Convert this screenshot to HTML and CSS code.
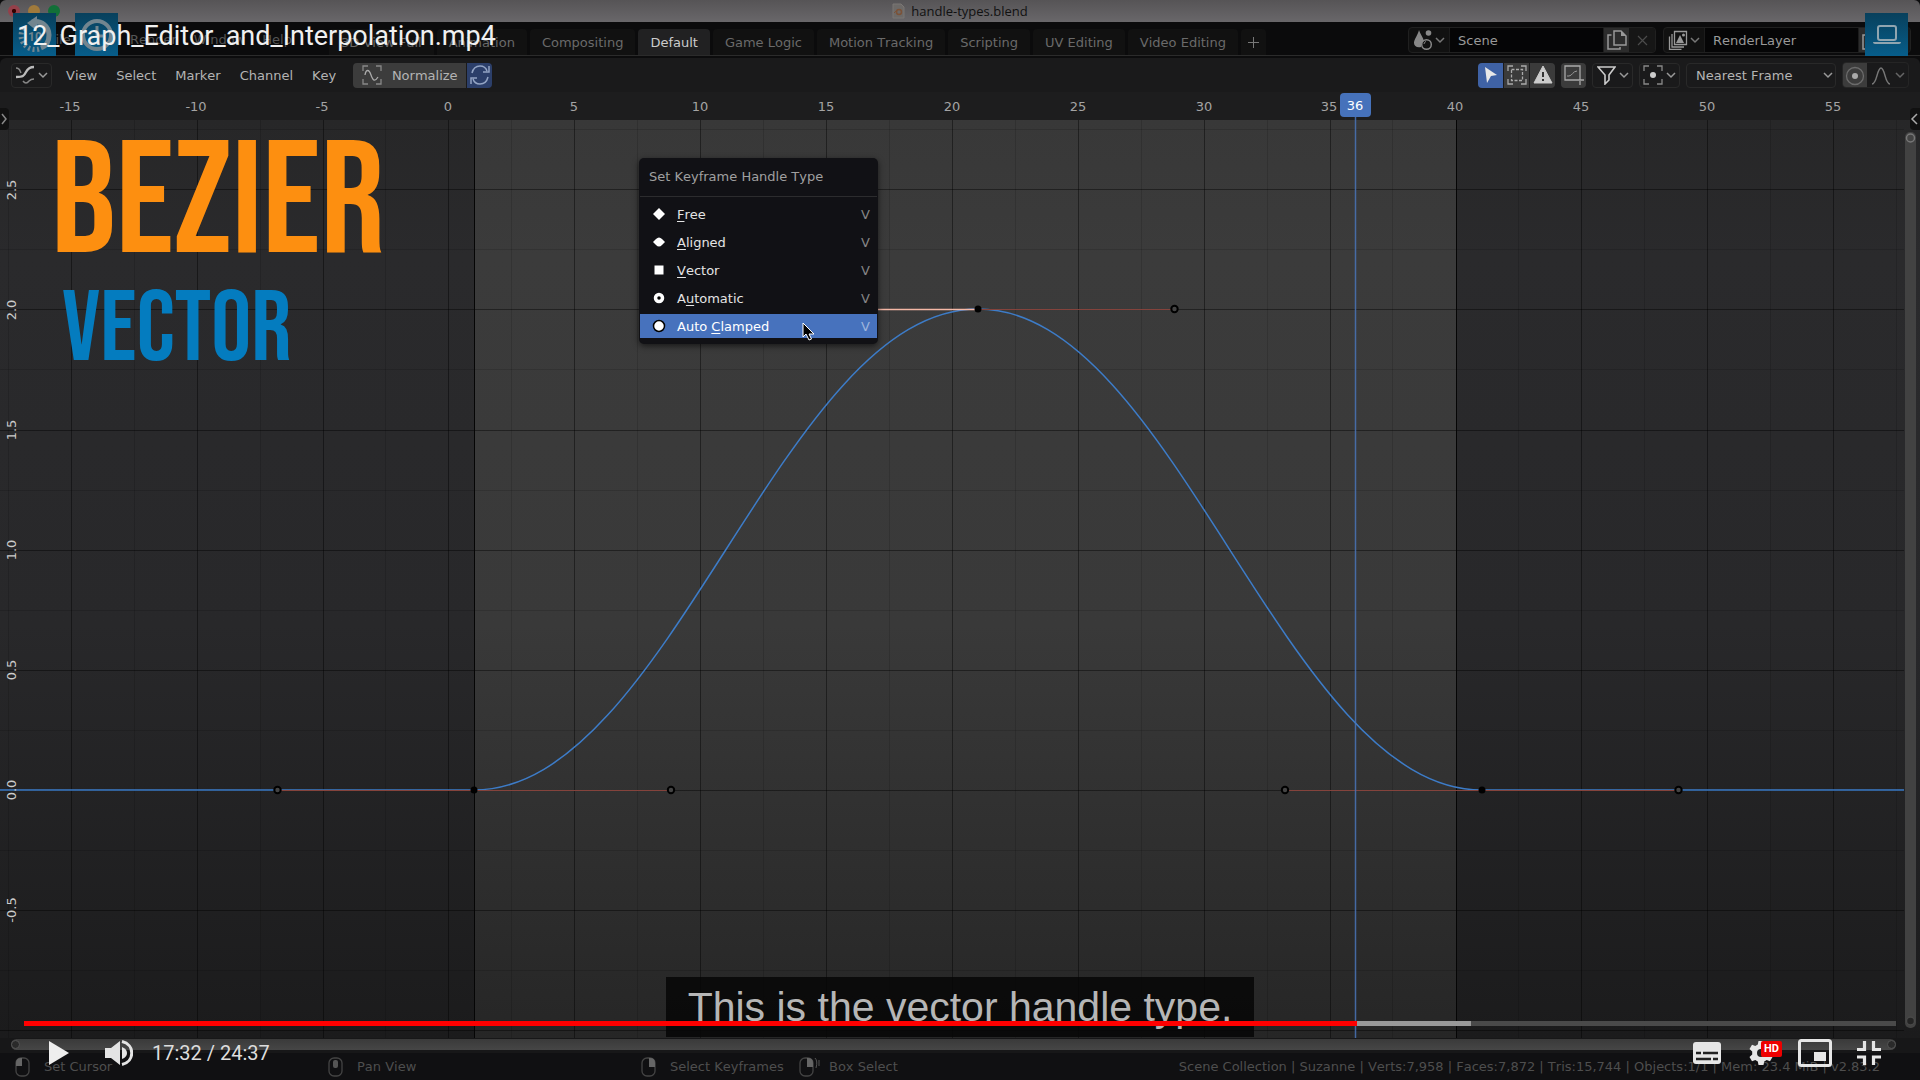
FILE: index.html
```
<!DOCTYPE html>
<html lang="en">
<head>
    <meta charset="utf-8">
    <title>12_Graph_Editor_and_Interpolation.mp4</title>
    <link rel="stylesheet" href="styles.css">
</head>
<body>
    <div class="window">
        <div class="titlebar">
            <div class="lights">
                <span class="light red"></span>
                <span class="light yellow"></span>
                <span class="light green"></span>
            </div>
            <svg class="file-icon" width="13" height="16" viewBox="0 0 13 16"><path d="M1 1h8l3 3v11H1z" fill="#6d6a68" stroke="#7b7774"/><circle cx="7" cy="9" r="2.5" fill="none" stroke="#7b5238" stroke-width="1.5"/><path d="M2 10l4-4" stroke="#7b5238"/></svg>
            <span>handle-types.blend</span>
        </div>

        <div class="topbar">
            <div class="app-menu">
                <button>File</button>
                <button>Edit</button>
                <button>Render</button>
                <button>Window</button>
                <button>Help</button>
            </div>
            <div class="tabs">
                <button>3D View Full</button>
                <button>Animation</button>
                <button>Compositing</button>
                <button class="active">Default</button>
                <button>Game Logic</button>
                <button>Motion Tracking</button>
                <button>Scripting</button>
                <button>UV Editing</button>
                <button>Video Editing</button>
                <button class="add" aria-label="Add workspace"><svg width="11" height="11" viewBox="0 0 11 11"><path d="M5.5 0v11M0 5.5h11" stroke="#777"/></svg></button>
            </div>
            <div class="data-block">
                <button class="pick" aria-label="Browse scene">
                    <svg width="20" height="22" viewBox="0 0 20 22"><path d="M6 1c1 4 4 7 5 11-2 1-3 3-3 6-4 1-7-1-7-4C1 10 5 6 6 1z" fill="#888"/><circle cx="15.5" cy="4" r="2.8" fill="#888"/><circle cx="13.5" cy="15.5" r="4.8" fill="none" stroke="#888" stroke-width="1.5"/><path d="M11 15q0-2 2-2.5" fill="none" stroke="#888"/></svg>
                    <svg width="10" height="7" viewBox="0 0 10 7"><path d="M1 1l4 4 4-4" fill="none" stroke="#777" stroke-width="1.5"/></svg>
                </button>
                <input type="text" value="Scene" aria-label="Scene">
                <button class="copy" aria-label="New scene"><svg width="20" height="20" viewBox="0 0 20 20"><path d="M7 1h7l5 5v9H7zM4.5 5H1v14h12v-2" fill="none" stroke="#999" stroke-width="1.5"/><path d="M14 1v5h5z" fill="#999"/></svg></button>
                <button class="del" aria-label="Remove scene"><svg width="11" height="11" viewBox="0 0 11 11"><path d="M1 1l9 9M10 1l-9 9" stroke="#4b4b4b" stroke-width="1.2"/></svg></button>
            </div>
            <div class="data-block">
                <button class="pick" aria-label="Browse view layer">
                    <svg width="20" height="20" viewBox="0 0 20 20"><path d="M6.5 1.5h12v13h-12zM4 4v13h12M1.5 6.5v13h12" fill="none" stroke="#999" stroke-width="1.3"/><path d="M8 13l4-8 4 8z" fill="#999"/><circle cx="15.5" cy="5" r="1.5" fill="#999"/></svg>
                    <svg width="10" height="7" viewBox="0 0 10 7"><path d="M1 1l4 4 4-4" fill="none" stroke="#777" stroke-width="1.5"/></svg>
                </button>
                <input type="text" value="RenderLayer" aria-label="View layer">
                <button class="copy" aria-label="New view layer"><svg width="20" height="20" viewBox="0 0 20 20"><path d="M7 1h7l5 5v9H7zM4.5 5H1v14h12v-2" fill="none" stroke="#999" stroke-width="1.5"/></svg></button>
                <button class="del" aria-label="Remove view layer"></button>
            </div>
        </div>

        <div class="editor">
            <div class="editor-header">
                <button class="box-btn" aria-label="Editor type">
                    <svg width="20" height="20" viewBox="0 0 20 20"><path d="M1 12c7 0 8-1 10-5s4-5 8-5" fill="none" stroke="#bbb" stroke-width="2.3"/><path d="M1 3c4 0 4 3 5 5M8 16q3 4 6 0 2-2 5-2" fill="none" stroke="#888" stroke-width="1.5"/></svg>
                    <svg width="10" height="7" viewBox="0 0 10 7"><path d="M1 1l4 4 4-4" fill="none" stroke="#999" stroke-width="1.5"/></svg>
                </button>
                <div class="menus">
                    <button>View</button>
                    <button>Select</button>
                    <button>Marker</button>
                    <button>Channel</button>
                    <button>Key</button>
                </div>
                <div class="normalize">
                    <button class="norm">
                        <svg width="20" height="20" viewBox="0 0 20 20"><path d="M1 6V1h5M14 1h5v5M19 14v5h-5M6 19H1v-5" fill="none" stroke="#888" stroke-width="1.3"/><path d="M3 10c1-6 4-6 6 0s4 7 7 2" fill="none" stroke="#aaa" stroke-width="1.3"/></svg>
                        Normalize
                    </button>
                    <button class="auto" aria-label="Auto normalize"><svg width="20" height="20" viewBox="0 0 20 20"><path d="M2 8c1-4 4-7 8-7 3 0 6 2 7 5M18 12c-1 4-4 7-8 7-3 0-6-2-7-5M19 1v6h-6M1 19v-6h6" fill="none" stroke="#93a4c4" stroke-width="1.5"/></svg></button>
                </div>
                <span class="spacer"></span>
                <div class="tool-group">
                    <button class="on" aria-label="Only selected"><svg width="18" height="18" viewBox="0 0 18 18"><path d="M3 1l12 8-6 1-4 7z" fill="#e8e8e8"/></svg></button>
                    <button aria-label="Show hidden"><svg width="20" height="20" viewBox="0 0 20 20"><path d="M1 6V1h5M14 1h5v5M19 14v5h-5M6 19H1v-5" fill="none" stroke="#aaa" stroke-width="1.3"/><rect x="4.5" y="4.5" width="11" height="11" fill="none" stroke="#aaa" stroke-width="1.3" stroke-dasharray="3 1.5"/></svg></button>
                    <button aria-label="Only errors"><svg width="20" height="20" viewBox="0 0 20 20"><path d="M10 1l9 17H1z" fill="#ccc" stroke="#ccc" stroke-linejoin="round"/><path d="M10 7v5M10 14v2" stroke="#333" stroke-width="2"/></svg></button>
                </div>
                <div class="tool-group">
                    <button aria-label="Create ghost curves"><svg width="20" height="20" viewBox="0 0 20 20"><path d="M1 1h15v14H1zM11 15h9M16 16v4" fill="none" stroke="#aaa" stroke-width="1.3"/><path d="M3 11h2c3 0 4-5 8-5" fill="none" stroke="#999"/></svg></button>
                </div>
                <button class="box-btn" aria-label="Filters">
                    <svg width="19" height="19" viewBox="0 0 19 19"><path d="M1 1h17l-6 8v5l-4 4V9z" fill="none" stroke="#ccc" stroke-width="1.6"/></svg>
                    <svg width="10" height="7" viewBox="0 0 10 7"><path d="M1 1l4 4 4-4" fill="none" stroke="#999" stroke-width="1.5"/></svg>
                </button>
                <button class="box-btn" aria-label="Pivot point">
                    <svg width="20" height="20" viewBox="0 0 20 20"><path d="M1 6V1h5M14 1h5v5M19 14v5h-5M6 19H1v-5" fill="none" stroke="#888" stroke-width="1.3"/><circle cx="10" cy="10" r="3" fill="#ccc"/></svg>
                    <svg width="10" height="7" viewBox="0 0 10 7"><path d="M1 1l4 4 4-4" fill="none" stroke="#999" stroke-width="1.5"/></svg>
                </button>
                <div class="snap">
                    <select aria-label="Auto snap">
                        <option>Nearest Frame</option>
                        <option>No Auto-Snap</option>
                    </select>
                    <svg class="arrow" width="10" height="7" viewBox="0 0 10 7"><path d="M1 1l4 4 4-4" fill="none" stroke="#999" stroke-width="1.5"/></svg>
                </div>
                <div class="proportional">
                    <button class="toggle" aria-label="Proportional editing"><svg width="20" height="20" viewBox="0 0 20 20"><circle cx="10" cy="10" r="8.5" fill="none" stroke="#6b6b6b" stroke-width="1.3"/><circle cx="10" cy="10" r="3" fill="#aaa"/></svg></button>
                    <button class="falloff" aria-label="Falloff">
                        <svg width="20" height="18" viewBox="0 0 20 18"><path d="M1 17c5 0 5-16 9-16s4 16 9 16" fill="none" stroke="#777" stroke-width="1.5"/></svg>
                        <svg width="10" height="7" viewBox="0 0 10 7"><path d="M1 1l4 4 4-4" fill="none" stroke="#666" stroke-width="1.5"/></svg>
                    </button>
                </div>
            </div>

            <div class="graph">
                <svg class="plot" viewBox="0 92 1920 946" preserveAspectRatio="none">
                    <defs>
                        <linearGradient id="outside" x1="0" y1="0" x2="0" y2="1">
                            <stop offset="0" stop-color="#272728"/>
                            <stop offset=".15" stop-color="#2a2a2c"/>
                            <stop offset=".55" stop-color="#28282a"/>
                            <stop offset="1" stop-color="#1b1b1c"/>
                        </linearGradient>
                        <linearGradient id="inside" x1="0" y1="0" x2="0" y2="1">
                            <stop offset="0" stop-color="#383838"/>
                            <stop offset=".15" stop-color="#3b3b3b"/>
                            <stop offset=".55" stop-color="#393939"/>
                            <stop offset="1" stop-color="#262626"/>
                        </linearGradient>
                    </defs>
                    <rect y="120" width="1920" height="918" fill="url(#outside)"/>
                    <rect x="474" y="120" width="982" height="918" fill="url(#inside)"/>

                    <!-- half steps -->
                    <g stroke="#000" stroke-opacity=".13" shape-rendering="crispEdges">
                        <path d="M8 120v918M134 120v918M260 120v918M385 120v918M511 120v918M637 120v918M763 120v918M889 120v918M1015 120v918M1141 120v918M1267 120v918M1392 120v918M1518 120v918M1644 120v918M1770 120v918M1896 120v918"/>
                        <path d="M0 129h1904M0 249h1904M0 369h1904M0 490h1904M0 610h1904M0 730h1904M0 850h1904M0 970h1904"/>
                    </g>
                    <!-- full steps -->
                    <g stroke="#000" stroke-opacity=".42" shape-rendering="crispEdges">
                        <path d="M71 120v918M197 120v918M323 120v918M448 120v918M574 120v918M700 120v918M826 120v918M952 120v918M1078 120v918M1204 120v918M1330 120v918M1456 120v918M1581 120v918M1707 120v918M1833 120v918"/>
                        <path d="M0 189h1904M0 309h1904M0 430h1904M0 550h1904M0 670h1904M0 790h1904M0 910h1904M0 1030h1904"/>
                    </g>
                    <path d="M474 120v918M1456 120v918" stroke="#050505" shape-rendering="crispEdges"/>

                    <path d="M0 790H474C670 790 782 309 978 309C1174 309 1285 790 1482 790H1904" fill="none" stroke="#3d7cc8" stroke-width="1.5"/>
                    <path d="M277 790.5h394M1285 790.5h393M978 309.5h196" stroke="#84433c"/>
                    <path d="M782 309.5h196" stroke="#f5b8a6" stroke-width="1.5"/>
                    <g fill="#000">
                        <circle cx="474" cy="790" r="3.5"/>
                        <circle cx="978" cy="309" r="3.5"/>
                        <circle cx="1482" cy="790" r="3.5"/>
                    </g>
                    <g fill="#444" stroke="#000" stroke-width="2">
                        <circle cx="277.5" cy="790" r="3.2"/>
                        <circle cx="671" cy="790" r="3.2"/>
                        <circle cx="1174.5" cy="309" r="3.2"/>
                        <circle cx="1285" cy="790" r="3.2"/>
                        <circle cx="1678.5" cy="790" r="3.2"/>
                    </g>

                    <!-- frame ruler -->
                    <rect y="92" width="1920" height="28" fill="#1d1d1e"/>
                    <g class="frames">
                        <text x="70" y="111">-15</text>
                        <text x="196" y="111">-10</text>
                        <text x="322" y="111">-5</text>
                        <text x="448" y="111">0</text>
                        <text x="574" y="111">5</text>
                        <text x="700" y="111">10</text>
                        <text x="826" y="111">15</text>
                        <text x="952" y="111">20</text>
                        <text x="1078" y="111">25</text>
                        <text x="1204" y="111">30</text>
                        <text x="1329" y="111">35</text>
                        <text x="1455" y="111">40</text>
                        <text x="1581" y="111">45</text>
                        <text x="1707" y="111">50</text>
                        <text x="1833" y="111">55</text>
                    </g>
                    <g class="values">
                        <text transform="translate(16 190) rotate(-90)">2.5</text>
                        <text transform="translate(16 310) rotate(-90)">2.0</text>
                        <text transform="translate(16 430) rotate(-90)">1.5</text>
                        <text transform="translate(16 550) rotate(-90)">1.0</text>
                        <text transform="translate(16 670) rotate(-90)">0.5</text>
                        <text transform="translate(16 790) rotate(-90)">0.0</text>
                        <text transform="translate(16 910) rotate(-90)">-0.5</text>
                    </g>

                    <!-- playhead -->
                    <path d="M1355.5 112V1038" stroke="#4a74b8" stroke-opacity=".85" stroke-width="1.5"/>
                    <rect x="1340" y="93" width="31" height="24" rx="4" fill="#4672bb"/>
                    <text class="current" x="1355" y="110">36</text>

                    <!-- region toggles and value scrollbar -->
                    <rect x="-4" y="108" width="13" height="22" rx="4" fill="#111"/>
                    <path d="M2 114l4 5-4 5" fill="none" stroke="#888" stroke-width="1.5"/>
                    <rect x="1910" y="108" width="16" height="22" rx="4" fill="#111"/>
                    <path d="M1917 114l-5 5 5 5" fill="none" stroke="#aaa" stroke-width="1.5"/>
                    <rect x="1905" y="132" width="11" height="896" rx="5" fill="#424242"/>
                    <circle cx="1910.5" cy="138" r="4" fill="#444" stroke="#777" stroke-width="1.5"/>
                    <circle cx="1910.5" cy="1021" r="4" fill="#242424" stroke="#484848" stroke-width="1.5"/>
                </svg>

                <div class="headline">
                    <div class="bezier">BEZIER</div>
                    <div class="vector">VECTOR</div>
                </div>

                <div class="popup">
                    <div class="popup-title">Set Keyframe Handle Type</div>
                    <button><svg width="16" height="16" viewBox="0 0 16 16"><path d="M8 2l6 6-6 6-6-6z" fill="#fff"/></svg><span><u>F</u>ree</span><kbd>V</kbd></button>
                    <button><svg width="16" height="16" viewBox="0 0 16 16"><path d="M2 8l3-3q3-3 6 0l3 3-3 3q-3 3-6 0z" fill="#fff"/></svg><span><u>A</u>ligned</span><kbd>V</kbd></button>
                    <button><svg width="16" height="16" viewBox="0 0 16 16"><rect x="3.5" y="3.5" width="9" height="9" fill="#fff"/></svg><span><u>V</u>ector</span><kbd>V</kbd></button>
                    <button><svg width="16" height="16" viewBox="0 0 16 16"><circle cx="8" cy="8" r="3.5" fill="#000" stroke="#fff" stroke-width="3.5"/></svg><span>A<u>u</u>tomatic</span><kbd>V</kbd></button>
                    <button class="hover"><svg width="16" height="16" viewBox="0 0 16 16"><circle cx="8" cy="8" r="5.5" fill="#fff" stroke="#000" stroke-width="1.5"/></svg><span>Auto <u>C</u>lamped</span><kbd>V</kbd></button>
                    <svg class="pointer" width="13" height="19" viewBox="0 0 13 19"><path d="M1 1v14l3-3 3 6 2.5-1-2.5-5h5z" fill="#000" stroke="#fff"/></svg>
                </div>
            </div>

            <div class="time-scroll"><div class="time-thumb"><i></i><i></i></div></div>
        </div>

        <div class="statusbar">
            <span class="hint set"><svg width="16" height="20" viewBox="0 0 16 20"><rect x="1" y="1" width="13" height="18" rx="5" fill="none" stroke="#444" stroke-width="1.3"/><path d="M1 9V6q0-5 5-5h1v8z" fill="#666"/></svg>Set Cursor</span>
            <span class="hint pan"><svg width="16" height="20" viewBox="0 0 16 20"><rect x="1" y="1" width="13" height="18" rx="5" fill="none" stroke="#444" stroke-width="1.3"/><rect x="5" y="3" width="5" height="8" rx="2" fill="#555"/></svg>Pan View</span>
            <span class="hint keys"><svg width="16" height="20" viewBox="0 0 16 20"><rect x="1" y="1" width="13" height="18" rx="5" fill="none" stroke="#444" stroke-width="1.3"/><path d="M8 1h1q5 0 5 5v4H8z" fill="#666"/></svg>Select Keyframes</span>
            <span class="hint box"><svg width="21" height="20" viewBox="0 0 21 20"><rect x="1" y="1" width="13" height="18" rx="5" fill="none" stroke="#444" stroke-width="1.3"/><path d="M8 1h1q5 0 5 5v4H8z" fill="#666"/><path d="M16 1q3 3 1 10M20 3v6" fill="none" stroke="#555"/></svg>Box Select</span>
            <span class="stats">Scene Collection | Suzanne | Verts:7,958 | Faces:7,872 | Tris:15,744 | Objects:1/1 | Mem: 23.4 MiB | v2.83.2</span>
        </div>
    </div>

    <!-- player overlay -->
    <div class="player-top">
        <button class="tile" aria-label="Back 10 seconds"><svg width="34" height="38" viewBox="0 0 34 38"><path d="M14 6c10-2 17 5 17 13 0 6-3 11-8 13" fill="none" stroke="#72858f" stroke-width="5"/><path d="M21 33A14 14 0 0 1 6 11" fill="none" stroke="#72858f" stroke-width="5" stroke-dasharray="2 2.5"/><path d="M19 0L9 7l10 8z" fill="#72858f"/><text x="17" y="25" class="ten">10</text></svg></button>
        <button class="tile" aria-label="Speed"><svg width="34" height="34" viewBox="0 0 34 34"><circle cx="17" cy="17" r="14" fill="none" stroke="#72858f" stroke-width="4"/><path d="M17 8v10h6" fill="none" stroke="#72858f" stroke-width="3"/></svg></button>
        <span class="spacer"></span>
        <button class="tile" aria-label="Theater mode"><svg width="28" height="20" viewBox="0 0 28 20"><rect x="5" y="1" width="18" height="14" rx="2" fill="none" stroke="#90a5b0" stroke-width="2"/><path d="M0 17h28q0 2-2 2H2q-2 0-2-2z" fill="#90a5b0"/></svg></button>
        <h1>12_Graph_Editor_and_Interpolation.mp4</h1>
    </div>

    <div class="player-bottom">
        <div class="caption">This is the vector handle type.</div>
        <input class="seek" type="range" min="0" max="1477" value="1052" aria-label="Seek">
        <div class="controls">
            <button class="play" aria-label="Pause"><svg width="20" height="24" viewBox="0 0 20 24"><path d="M0 0l20 12L0 24z" fill="#eee"/></svg></button>
            <button class="volume" aria-label="Mute"><svg width="28" height="26" viewBox="0 0 28 26"><path d="M0 8h6l9-7v24l-9-7H0z" fill="#e4e4e4"/><path d="M17 7q5 2 5 6t-5 6z" fill="#e4e4e4"/><path d="M17 1.5c13 3 13 20 0 23" fill="none" stroke="#e4e4e4" stroke-width="3"/></svg></button>
            <span class="time">17:32 / 24:37</span>
            <span class="spacer"></span>
            <button class="cc" aria-label="Subtitles"><svg width="28" height="22" viewBox="0 0 28 22"><rect width="28" height="22" rx="3" fill="#e6e6e6"/><path d="M3 11h5M10 11h15M3 17h15M20 17h5" stroke="#222" stroke-width="2.4"/></svg></button>
            <button class="gear" aria-label="Settings"><svg width="24" height="24" viewBox="0 0 24 24"><path d="M9.500 0h5l.7 3.500 2.500 1.400L21 3.700l2.500 4.400-2.700 2.400v3l2.700 2.400L21 20.300l-3.300-1.200-2.500 1.400-.7 3.500h-5l-.7-3.500-2.500-1.400L3 20.300.5 15.900l2.700-2.400v-3L.5 8.100 3 3.700l3.300 1.200 2.500-1.400z" fill="#e6e6e6"/><circle cx="12" cy="12" r="4" fill="#222"/></svg><b>HD</b></button>
            <button class="pip" aria-label="Miniplayer"><svg width="34" height="28" viewBox="0 0 34 28"><rect x="1.500" y="1.500" width="31" height="25" rx="2" fill="none" stroke="#e6e6e6" stroke-width="3"/><rect x="16" y="13" width="12" height="9" fill="#e6e6e6"/></svg></button>
            <button class="full" aria-label="Exit full screen"><svg width="24" height="24" viewBox="0 0 24 24"><path d="M0 8.500h7.500V0M24 8.500h-7.500V0M0 16h7.500v8M24 16h-7.500v8" fill="none" stroke="#e6e6e6" stroke-width="3.200"/></svg></button>
        </div>
    </div>
</body>
</html>
```

FILE: styles.css
```
* {
    box-sizing: border-box;
}
body {
    margin: 0;
    position: relative;
    background: #0c0c0d;
    color: #aaa;
    font-family: "DejaVu Sans", sans-serif;
    font-size: 13px;
    font-kerning: none;
}
button, input, select {
    font: inherit;
    font-kerning: inherit;
    color: inherit;
    background: none;
    border: none;
    margin: 0;
    padding: 0;
}
button {
    display: flex;
    align-items: center;
    justify-content: center;
    white-space: nowrap;
}
svg {
    flex: none;
    display: block;
}
.spacer {
    flex: 1;
}

/* application window */
.window {
    display: flex;
    flex-direction: column;
    min-height: 100vh;
    overflow: hidden;
}
.titlebar {
    position: relative;
    display: flex;
    align-items: center;
    justify-content: center;
    gap: 6px;
    height: 22px;
    background: linear-gradient(#565456, #69676a);
    border-radius: 6px 6px 0 0;
    color: #111;
    font-family: "Open Sans", sans-serif;
}
.lights {
    position: absolute;
    left: 8px;
    display: flex;
    gap: 8px;
}
.light {
    width: 12px;
    height: 12px;
    border-radius: 50%;
}
.red {
    background: radial-gradient(#300 20%, #94404a 30%);
}
.yellow {
    background: #a07a3c;
}
.green {
    background: #127038;
}
.topbar {
    display: flex;
    height: 34px;
    padding: 5px 9px 0 0;
    background: #0b0b0c;
    border-bottom: 1px solid #2b2b2b;
    color: #6a6a6a;
}
.app-menu {
    display: flex;
    align-items: center;
    gap: 17px;
    width: 329px;
    height: 24px;
    padding-left: 48px;
    color: #555;
}
.tabs {
    display: flex;
    align-self: flex-end;
    flex: 1;
    gap: 3px;
}
.tabs button {
    height: 26px;
    padding: 0 12px;
    background: #111;
    border-radius: 4px 4px 0 0;
}
.tabs .active {
    background: #212122;
    color: #ccc;
}
.tabs .add {
    padding: 0 7px;
}
.data-block {
    display: flex;
    width: 248px;
    height: 26px;
    margin-left: 7px;
    border: 1px solid #202020;
    border-radius: 4px;
    background: #111;
    color: #999;
    overflow: hidden;
}
.pick {
    width: 40px;
    gap: 2px;
}
.data-block input {
    flex: 1;
    min-width: 0;
    padding: 0 8px;
    background: #050506;
    border: 1px solid #1c1c1c;
    border-width: 0 1px;
}
.copy {
    width: 25px;
    background: #2c2c2c;
}
.del {
    width: 26px;
    background: #161616;
}

/* graph editor */
.editor {
    display: flex;
    flex-direction: column;
    flex: 1;
    margin-top: 2px;
    background: #1a1a1b;
    border-radius: 6px;
}
.editor-header {
    display: flex;
    align-items: center;
    gap: 6px;
    height: 34px;
    padding: 0 11px;
    color: #b4b4b4;
}
.editor-header button {
    height: 25px;
}
.box-btn {
    width: 41px;
    gap: 3px;
}
.editor-header .box-btn {
    border: 1px solid #292929;
    border-radius: 4px;
}
.menus {
    display: flex;
    gap: 19px;
    padding: 0 11px 0 8px;
}
.normalize, .tool-group, .proportional {
    display: flex;
    gap: 1px;
    border-radius: 4px;
    overflow: hidden;
}
.norm {
    width: 113px;
    gap: 10px;
    background: #3c3c3c;
}
.auto {
    width: 25px;
    background: #2c3f6a;
}
.tool-group button {
    width: 25px;
    background: #3b3b3b;
}
.tool-group .on {
    background: #3f62a5;
}
.snap {
    position: relative;
    width: 150px;
}
.snap select {
    appearance: none;
    width: 100%;
    height: 25px;
    padding: 0 9px;
    border: 1px solid #292929;
    border-radius: 4px;
}
.arrow {
    position: absolute;
    right: 3px;
    top: 9px;
    pointer-events: none;
}
.proportional {
    border: 1px solid #252525;
    height: 26px;
}
.toggle {
    width: 24px;
    background: #3c3c3c;
}
.falloff {
    width: 40px;
    gap: 4px;
}
.graph {
    position: relative;
    flex: 1;
    min-height: 400px;
}
.plot {
    position: absolute;
    inset: 0;
    width: 100%;
    height: 100%;
}
.plot text {
    font-size: 13px;
    text-anchor: middle;
}
.frames text {
    fill: #a4a4a4;
}
.values text {
    fill: #ccc;
}
.plot .current {
    fill: #fff;
}
.headline {
    position: absolute;
    left: 51px;
    top: 32px;
    font-family: "Bebas Neue", "Liberation Sans", sans-serif;
}
.bezier {
    color: #fd8f10;
    font-size: 160px;
    line-height: 160px;
}
.vector {
    padding-left: 11px;
    color: #047cbf;
    font-size: 100px;
    line-height: 92px;
}
.popup {
    position: absolute;
    left: 639px;
    top: 66px;
    width: 239px;
    padding: 0 1px 2px;
    background: #111115;
    border-radius: 5px;
    box-shadow: 0 2px 6px rgba(0, 0, 0, .6);
    color: #e4e4e4;
}
.popup-title {
    height: 39px;
    margin-bottom: 5px;
    padding-left: 9px;
    border-bottom: 1px solid #2c2c2e;
    color: #a0a0a0;
    line-height: 38px;
}
.popup button {
    width: 100%;
    height: 24px;
    margin: 2px 0 4px;
    padding: 0 7px 0 11px;
    gap: 10px;
}
.popup button span {
    flex: 1;
    text-align: left;
}
.popup u {
    text-underline-offset: 2px;
}
.popup kbd {
    font: inherit;
    color: #858585;
}
.popup .hover {
    background: #4772bd;
    color: #fff;
}
.popup .hover kbd {
    color: #9db4dc;
}
.pointer {
    position: absolute;
    left: 163px;
    top: 164px;
}
.time-scroll {
    height: 15px;
    padding: 1px 24px 3px 11px;
    background: #171718;
}
.time-thumb {
    display: flex;
    align-items: center;
    justify-content: space-between;
    height: 11px;
    border-radius: 6px;
    background: linear-gradient(#3a3a3a, #464646);
}
.time-thumb i {
    width: 9px;
    height: 9px;
    border: 1px solid #555;
    border-radius: 50%;
    background: #2a2a2a;
}
.statusbar {
    display: flex;
    align-items: center;
    height: 27px;
    padding: 0 40px 0 15px;
    background: #101012;
    color: #4e4e4e;
    white-space: nowrap;
}
.hint {
    display: flex;
    align-items: center;
    gap: 13px;
}
.set, .pan {
    width: 313px;
}
.keys {
    width: 158px;
}
.hint.box {
    gap: 9px;
}
.stats {
    margin-left: auto;
}

/* video player overlay */
.player-top {
    position: absolute;
    top: 13px;
    left: 13px;
    right: 12px;
    display: flex;
    gap: 19px;
}
.tile {
    width: 43px;
    height: 43px;
    background: linear-gradient(#08405c, #075d8a);
}
.ten {
    font: bold 12px "Roboto", sans-serif;
    fill: #72858f;
    text-anchor: middle;
}
.player-top h1 {
    position: absolute;
    left: 4px;
    top: 6px;
    margin: 0;
    color: #f0f0f0;
    font: 27px/34px "Roboto", sans-serif;
}
.player-bottom {
    position: absolute;
    left: 24px;
    right: 24px;
    bottom: 0;
    display: flex;
    flex-direction: column;
    align-items: center;
}
.caption {
    margin-bottom: -16px;
    padding: 0 22px;
    background: rgba(6, 6, 6, .85);
    color: #b6b6b6;
    font: 41px/60px "Liberation Sans", Arial, sans-serif;
}
.seek {
    appearance: none;
    position: relative;
    width: 100%;
    height: 5px;
    background: linear-gradient(90deg, #f00 71.2%, #999 71.2%, #999 77.3%, #4a4a4a 77.3%);
}
.seek::-webkit-slider-thumb {
    appearance: none;
    width: 0;
    height: 0;
}
.controls {
    display: flex;
    align-items: center;
    width: 100%;
    height: 54px;
    padding: 0 15px 0 25px;
}
.volume {
    margin-left: 36px;
}
.time {
    margin-left: 19px;
    color: #ddd;
    font: 20px/24px "Roboto", sans-serif;
}
.gear {
    position: relative;
    margin: 0 25px 0 28px;
}
.gear b {
    position: absolute;
    left: 12px;
    top: 0;
    padding: 0 3px;
    border-radius: 2px;
    background: #e00;
    color: #fff;
    font: bold 11px/16px "Roboto", sans-serif;
}
.full {
    margin-left: 25px;
}
```
